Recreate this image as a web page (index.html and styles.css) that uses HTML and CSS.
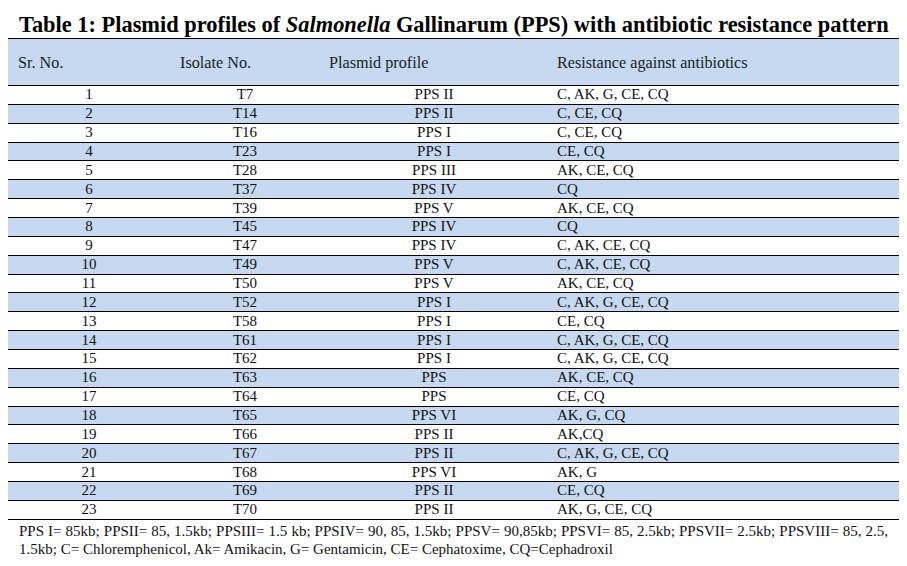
FILE: index.html
```html
<!DOCTYPE html>
<html>
<head>
<meta charset="utf-8">
<link rel="stylesheet" href="styles.css">
</head>
<body>
<div class="page">
  <div class="title">Table 1: Plasmid profiles of <i>Salmonella</i> Gallinarum (PPS) with antibiotic resistance pattern</div>
  <table class="tbl">
    <colgroup>
      <col class="c1"><col class="c2"><col class="c3"><col class="c4">
    </colgroup>
    <thead>
      <tr class="head"><th>Sr. No.</th><th>Isolate No.</th><th>Plasmid profile</th><th>Resistance against antibiotics</th></tr>
    </thead>
    <tbody>
      <tr><td class="ctr">1</td><td class="ctr">T7</td><td class="ctr">PPS II</td><td>C, AK, G, CE, CQ</td></tr>
      <tr><td class="ctr">2</td><td class="ctr">T14</td><td class="ctr">PPS II</td><td>C, CE, CQ</td></tr>
      <tr><td class="ctr">3</td><td class="ctr">T16</td><td class="ctr">PPS I</td><td>C, CE, CQ</td></tr>
      <tr><td class="ctr">4</td><td class="ctr">T23</td><td class="ctr">PPS I</td><td>CE, CQ</td></tr>
      <tr><td class="ctr">5</td><td class="ctr">T28</td><td class="ctr">PPS III</td><td>AK, CE, CQ</td></tr>
      <tr><td class="ctr">6</td><td class="ctr">T37</td><td class="ctr">PPS IV</td><td>CQ</td></tr>
      <tr><td class="ctr">7</td><td class="ctr">T39</td><td class="ctr">PPS V</td><td>AK, CE, CQ</td></tr>
      <tr><td class="ctr">8</td><td class="ctr">T45</td><td class="ctr">PPS IV</td><td>CQ</td></tr>
      <tr><td class="ctr">9</td><td class="ctr">T47</td><td class="ctr">PPS IV</td><td>C, AK, CE, CQ</td></tr>
      <tr><td class="ctr">10</td><td class="ctr">T49</td><td class="ctr">PPS V</td><td>C, AK, CE, CQ</td></tr>
      <tr><td class="ctr">11</td><td class="ctr">T50</td><td class="ctr">PPS V</td><td>AK, CE, CQ</td></tr>
      <tr><td class="ctr">12</td><td class="ctr">T52</td><td class="ctr">PPS I</td><td>C, AK, G, CE, CQ</td></tr>
      <tr><td class="ctr">13</td><td class="ctr">T58</td><td class="ctr">PPS I</td><td>CE, CQ</td></tr>
      <tr><td class="ctr">14</td><td class="ctr">T61</td><td class="ctr">PPS I</td><td>C, AK, G, CE, CQ</td></tr>
      <tr><td class="ctr">15</td><td class="ctr">T62</td><td class="ctr">PPS I</td><td>C, AK, G, CE, CQ</td></tr>
      <tr><td class="ctr">16</td><td class="ctr">T63</td><td class="ctr">PPS</td><td>AK, CE, CQ</td></tr>
      <tr><td class="ctr">17</td><td class="ctr">T64</td><td class="ctr">PPS</td><td>CE, CQ</td></tr>
      <tr><td class="ctr">18</td><td class="ctr">T65</td><td class="ctr">PPS VI</td><td>AK, G, CQ</td></tr>
      <tr><td class="ctr">19</td><td class="ctr">T66</td><td class="ctr">PPS II</td><td>AK,CQ</td></tr>
      <tr><td class="ctr">20</td><td class="ctr">T67</td><td class="ctr">PPS II</td><td>C, AK, G, CE, CQ</td></tr>
      <tr><td class="ctr">21</td><td class="ctr">T68</td><td class="ctr">PPS VI</td><td>AK, G</td></tr>
      <tr><td class="ctr">22</td><td class="ctr">T69</td><td class="ctr">PPS II</td><td>CE, CQ</td></tr>
      <tr><td class="ctr">23</td><td class="ctr">T70</td><td class="ctr">PPS II</td><td>AK, G, CE, CQ</td></tr>
    </tbody>
  </table>
  <p class="note">PPS I= 85kb; PPSII= 85, 1.5kb; PPSIII= 1.5 kb; PPSIV= 90, 85, 1.5kb; PPSV= 90,85kb; PPSVI= 85, 2.5kb; PPSVII= 2.5kb; PPSVIII= 85, 2.5, 1.5kb; C= Chloremphenicol, Ak= Amikacin, G= Gentamicin, CE= Cephatoxime, CQ=Cephadroxil</p>
</div>
</body>
</html>
```

FILE: styles.css
```css
html, body {
  margin: 0;
  padding: 0;
  background: #ffffff;
}
.page {
  width: 907px;
  height: 566px;
  padding: 0 8px 0 8px;
  box-sizing: border-box;
  font-family: "Liberation Serif", "Times New Roman", serif;
  color: #111111;
}
.title {
  font-size: 22.4px;
  font-weight: bold;
  line-height: 26px;
  padding: 12px 0 0 11px;
  height: 26px;
  box-sizing: content-box;
  white-space: nowrap;
  color: #000;
}
.tbl {
  width: 891px;
  border-collapse: collapse;
  table-layout: fixed;
  font-size: 15px;
}
.c1 { width: 162px; }
.c2 { width: 150px; }
.c3 { width: 228px; }
.c4 { width: 351px; }
.tbl th {
  text-align: left;
  font-weight: normal;
  font-size: 16.2px;
  color: #222;
  height: 44px;
  padding: 2px 0 0 10px;
  background: #c6d9f1;
  border-top: 1px solid #000;
  border-bottom: 1px solid #000;
}
.tbl th:nth-child(3) { padding-left: 9px; }
.tbl th:nth-child(4) { padding-left: 9px; }
.tbl td {
  height: 17.87px;
  padding: 0 0 0 9px;
  line-height: 17px;
  border-bottom: 1px solid #000;
  white-space: nowrap;
}
.tbl td.ctr {
  text-align: center;
  padding: 0;
}
.tbl tbody tr:nth-child(even) td {
  background: #c6d9f1;
}
.note {
  margin: 0;
  padding: 2px 11px 0 11px;
  font-size: 15px;
  line-height: 18px;
  text-align: justify;
}
```
